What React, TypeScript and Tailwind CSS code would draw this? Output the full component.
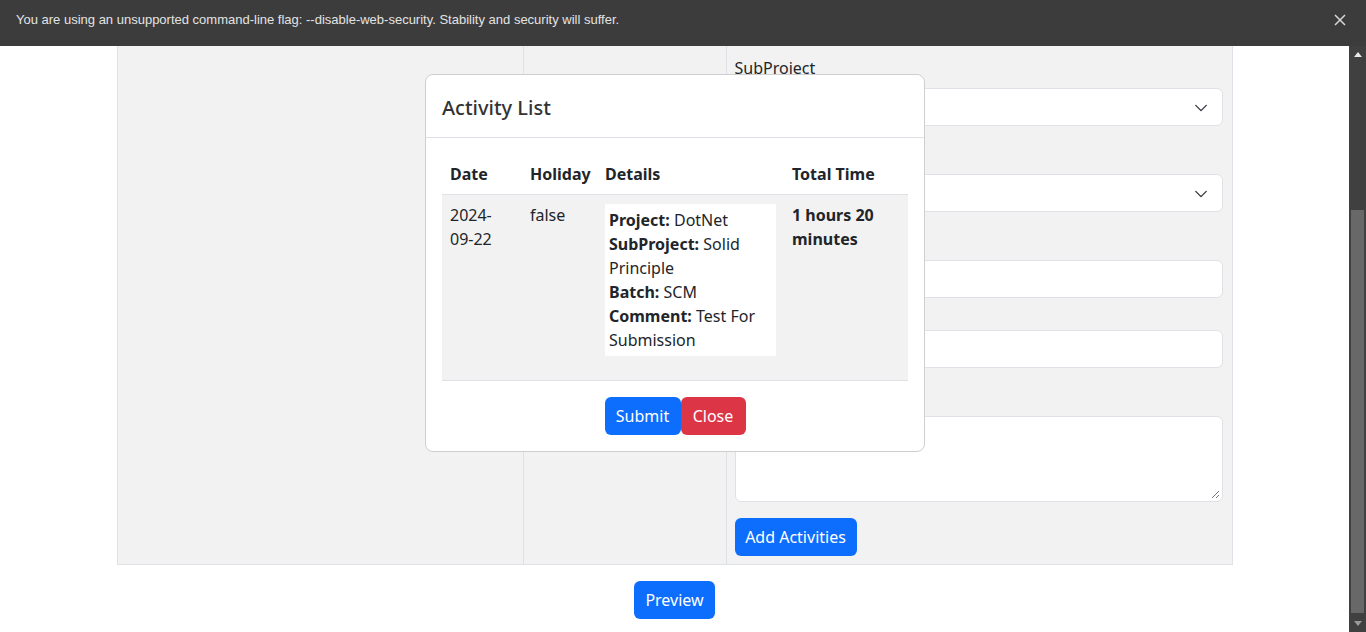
import React from "react";

const font = { fontFamily: '"Noto Sans", "Open Sans", sans-serif' };

function Chevron() {
  return (
    <svg width="14" height="14" viewBox="0 0 16 16" className="absolute right-[14px] top-[12px]">
      <path d="M2 5l6 6 6-6" fill="none" stroke="#343a40" strokeWidth="1.6" strokeLinecap="round" strokeLinejoin="round" />
    </svg>
  );
}

function Select() {
  return (
    <div className="relative h-[38px] w-full rounded-[6px] border border-[#dee2e6] bg-white">
      <Chevron />
    </div>
  );
}

function Input() {
  return <div className="h-[38px] w-full rounded-[6px] border border-[#dee2e6] bg-white" />;
}

export default function App() {
  return (
    <div className="flex h-[632px] w-[1366px] flex-col overflow-hidden bg-white text-[#212529]" style={font}>
      {/* Info bar */}
      <div className="flex h-[46px] shrink-0 items-center justify-between bg-[#3c3c3c] pl-[16px] pr-[20px] pb-[6px]">
        <span className="text-[13px] text-[#e3e3e3]" style={{ fontFamily: '"Liberation Sans", Arial, sans-serif' }}>
          You are using an unsupported command-line flag: --disable-web-security. Stability and security will suffer.
        </span>
        <svg width="12" height="12" viewBox="0 0 12 12">
          <path d="M1 1l10 10M11 1L1 11" stroke="#d8d8d8" strokeWidth="1.5" />
        </svg>
      </div>

      <div className="flex flex-1 overflow-hidden">
        <div className="relative flex-1">
          {/* Page content */}
          <div className="mx-auto flex w-[1116px] border-x border-b border-[#dee2e6] bg-[#f2f2f2]">
            <div className="w-[405px] shrink-0" />
            <div className="w-[203px] shrink-0 border-l border-[#dee2e6]" />
            <div className="flex-1 border-l border-[#dee2e6] pl-[8px] pr-[9px] pt-[10px] pb-[8px] text-[16px]">
              <div className="h-[24px] leading-[24px]">SubProject</div>
              <div className="mt-[8px]"><Select /></div>
              <div className="mt-[16px] h-[24px] leading-[24px]">Batch</div>
              <div className="mt-[8px]"><Select /></div>
              <div className="mt-[16px] h-[24px] leading-[24px]">Hours</div>
              <div className="mt-[8px]"><Input /></div>
              <div className="mt-[32px]"><Input /></div>
              <div className="mt-[16px] h-[24px] leading-[24px]">Comment</div>
              <div className="relative mt-[8px] h-[86px] w-full rounded-[6px] border border-[#dee2e6] bg-white">
                <svg width="10" height="10" viewBox="0 0 10 10" className="absolute bottom-[2px] right-[2px]">
                  <path d="M9 2L2 9M9 6L6 9" stroke="#777" strokeWidth="1" />
                </svg>
              </div>
              <button className="mt-[16px] h-[38px] w-[122px] rounded-[6px] bg-[#0d6efd] text-[16px] text-white">
                Add Activities
              </button>
            </div>
          </div>
          <div className="mt-[16px] flex justify-center">
            <button className="h-[38px] w-[81px] rounded-[6px] bg-[#0d6efd] text-[16px] text-white">Preview</button>
          </div>

          {/* Modal */}
          <div className="absolute left-[425px] top-[28px] w-[500px] rounded-[8px] border border-[#cfcfcf] bg-white">
            <div className="border-b border-[#dee2e6] px-[16px] pt-[18px] pb-[14px]">
              <h5 className="text-[20px] font-medium leading-[30px] text-[#333]">Activity List</h5>
            </div>
            <div className="px-[16px] pt-[16px]">
              <table className="w-[466px] table-fixed border-collapse text-left text-[16px] leading-[24px]">
                <colgroup>
                  <col className="w-[80px]" />
                  <col className="w-[75px]" />
                  <col className="w-[187px]" />
                  <col className="w-[124px]" />
                </colgroup>
                <thead>
                  <tr className="border-b border-[#dee2e6]">
                    <th className="p-[8px] font-bold">Date</th>
                    <th className="p-[8px] font-bold">Holiday</th>
                    <th className="p-[8px] font-bold">Details</th>
                    <th className="p-[8px] font-bold">Total Time</th>
                  </tr>
                </thead>
                <tbody>
                  <tr className="border-b border-[#dee2e6] bg-[#f2f2f2] align-top">
                    <td className="p-[8px]">2024-09-22</td>
                    <td className="p-[8px]">false</td>
                    <td className="p-[8px]">
                      <div className="mb-[16px] mt-[1px] bg-white p-[4px]">
                        <div><b>Project:</b> DotNet</div>
                        <div><b>SubProject:</b> Solid Principle</div>
                        <div><b>Batch:</b> SCM</div>
                        <div><b>Comment:</b> Test For Submission</div>
                      </div>
                    </td>
                    <td className="p-[8px] font-bold">1 hours 20 minutes</td>
                  </tr>
                </tbody>
              </table>
            </div>
            <div className="flex justify-center pt-[16px] pb-[16px]">
              <button className="h-[38px] w-[76px] rounded-[6px] bg-[#0d6efd] text-[16px] text-white">Submit</button>
              <button className="h-[38px] w-[65px] rounded-[6px] bg-[#dc3545] text-[16px] text-white">Close</button>
            </div>
          </div>
        </div>

        {/* Scrollbar */}
        <div className="relative flex w-[17px] shrink-0 flex-col bg-[#404040]">
          <div className="flex h-[17px] items-center justify-center">
            <svg width="8" height="5" viewBox="0 0 8 5"><path d="M0 5L4 0L8 5Z" fill="#e8e8e8" /></svg>
          </div>
          <div className="flex-1 px-[2px] pt-[147px] pb-[2px]">
            <div className="h-full w-full bg-[#686868]" />
          </div>
          <div className="flex h-[17px] items-center justify-center">
            <svg width="8" height="5" viewBox="0 0 8 5"><path d="M0 0L4 5L8 0Z" fill="#9a9a9a" /></svg>
          </div>
        </div>
      </div>
    </div>
  );
}
